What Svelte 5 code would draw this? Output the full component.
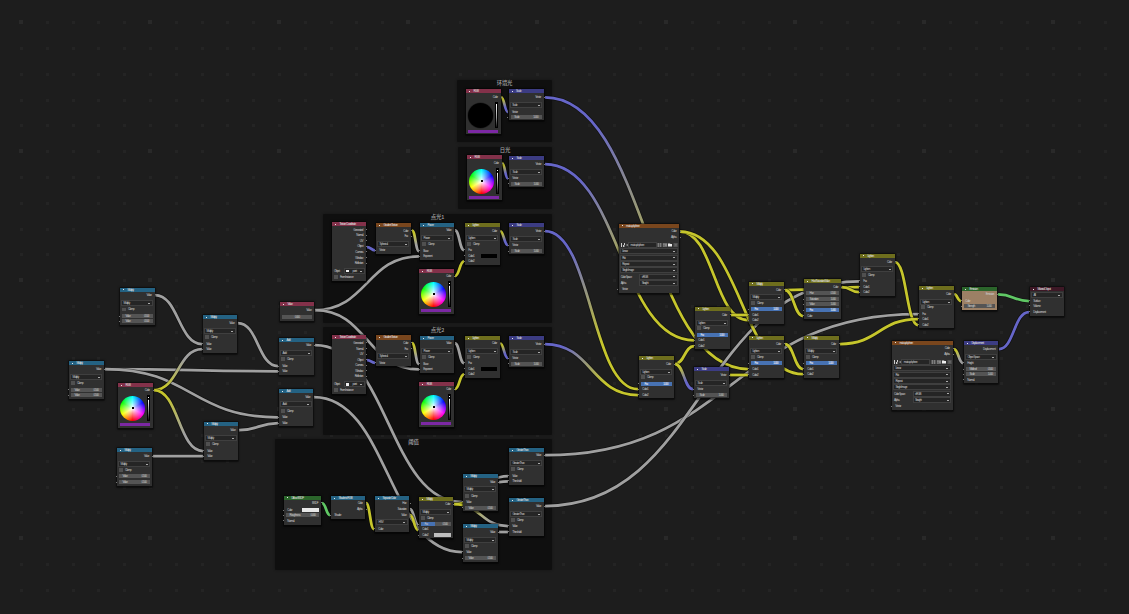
<script>
  const OUT = 'out', IN = 'in', DD = 'dd', CB = 'cb', F = 'field', B = 'blue';

  // Row: [kind, centre y, label, value]; every y is in canvas units.
  const math = (x, y, w, h, t, o, d, c, rows) => ({
    x, y, w, h, color: 'math', title: t,
    rows: [[OUT, o, 'Value'], [DD, d, t], [CB, c, 'Clamp'], ...rows]
  });
  const rgb = (x, y, o, black) => ({
    x, y, w: 34.5, h: 45, color: 'input', title: 'RGB',
    rows: [[OUT, o, 'Color'], ['wheel', o + 18, '', black], ['hex', o + 34.3, '']]
  });
  const scale = (x, y, o, d, v, f) => ({
    x, y, w: 35, h: 31.3, color: 'vector', title: 'Scale',
    rows: [[OUT, o, 'Vector'], [DD, d, 'Scale'], [IN, v, 'Vector'], [F, f, 'Scale', '1.000']]
  });
  const mix = (x, y, o, d, c, f, a, b, t = 'Lighten', fac = B) => ({
    x, y, w: 34.7, h: 42, color: 'mix', title: t,
    rows: [[OUT, o, 'Color'], [DD, d, t], [CB, c, 'Clamp'], [fac, f, 'Fac', '1.000'], [IN, a, 'Color1'], [IN, b, 'Color2']]
  });
  const coords = (y) => ({
    x: 332, y, w: 34, h: 58.7, color: 'input', title: 'Texture Coordinate',
    rows: [
      ...['Generated', 'Normal', 'UV', 'Object', 'Camera', 'Window', 'Reflection'].map((s, i) => [OUT, y + 7.8 + i * 5.55, s]),
      ['object', y + 49.3, 'Object', 'point'], [CB, y + 55, 'From Instancer']
    ]
  });
  const gradient = (y) => ({
    x: 376, y, w: 35, h: 30.7, color: 'texture', title: 'Gradient Texture',
    rows: [[OUT, y + 7.5, 'Color'], [OUT, y + 13.3, 'Fac'], [DD, y + 21, 'Spherical'], [IN, y + 27.3, 'Vector']]
  });
  const image = (x, y) => ({
    x, y, w: 60.5, h: 69.5, color: 'texture', title: 'matcap/sphere',
    rows: [
      [OUT, y + 7.6, 'Color'], [OUT, y + 13.4, 'Alpha'], ['file', y + 21, 'matcap/sphere'],
      [DD, y + 27.8, 'Linear'], [DD, y + 34, 'Flat'], [DD, y + 40.3, 'Repeat'], [DD, y + 46.5, 'Single Image'],
      ['pair', y + 53, 'Color Space', 'sRGB'], ['pair', y + 59.5, 'Alpha', 'Straight'], [IN, y + 65.8, 'Vector']
    ]
  });
  const V = (y) => [F, y, 'Value', '0.500'];
  const I = (y, t = 'Value') => [IN, y, t];

  const frames = [
    { x: 457, y: 80, w: 95, h: 62, t: '环境光' },
    { x: 458, y: 147, w: 94, h: 62, t: '日光' },
    { x: 323, y: 214, w: 229, h: 108.5, t: '点光1' },
    { x: 323, y: 327, w: 229, h: 108, t: '点光2' },
    { x: 275, y: 439, w: 277, h: 131, t: '阈值' }
  ];

  const nodes = [
    math(120, 287.7, 34.5, 37.5, 'Multiply', 295, 303.5, 309.5, [V(316.3), V(321.4)]),
    math(203, 315, 34.3, 38, 'Multiply', 323, 331.3, 337.3, [I(344), I(349.2)]),
    math(69, 361, 35, 38, 'Multiply', 369, 377.2, 383.3, [V(390), V(395.2)]),
    rgb(118, 383, 390),
    math(117, 448, 35, 38, 'Multiply', 456.3, 464.2, 470.2, [V(476.4), V(482.2)]),
    math(204, 421.7, 34.3, 38, 'Multiply', 430.2, 438.3, 444.3, [I(451), I(456.2)]),
    { x: 280, y: 302, w: 34.3, h: 19, color: 'input', title: 'Value', rows: [[OUT, 310, 'Value'], ['single', 317.2, '0.000']] },
    math(279, 338, 35, 37, 'Add', 345, 353.2, 359.3, [I(366.2), I(371.2)]),
    math(279, 389, 34.2, 37, 'Add', 397, 404.4, 411, [I(417.2), I(423.2)]),
    coords(222), gradient(223),
    math(420, 223, 34.2, 37, 'Power', 230.3, 238.3, 244.4, [I(251, 'Base'), I(256.2, 'Exponent')]),
    rgb(419.3, 269, 276),
    { ...mix(465, 223, 231, 238.3, 244.3, 250, 256, 261.2, 'Lighten', IN), swatch: 1 },
    scale(509, 223, 231, 239.3, 245.2, 251.3),
    coords(335.2), gradient(335.3),
    math(420, 336, 34.2, 37, 'Power', 343.3, 351.4, 357.3, [I(364, 'Base'), I(369.2, 'Exponent')]),
    rgb(419.3, 382, 389),
    { ...mix(465, 336, 343.3, 351.3, 357, 363, 369, 374.2, 'Lighten', IN), swatch: 1 },
    scale(509, 336, 344, 352.3, 358.2, 364),
    rgb(466, 89, 97, true), scale(508.7, 89, 97, 105.2, 112, 117.2),
    rgb(467, 155, 163), scale(509, 156, 164, 172.3, 178.3, 184),
    { x: 284, y: 495.7, w: 37, h: 29.3, color: 'shader', title: 'Diffuse BSDF', rows: [[OUT, 503, 'BSDF'], ['swatch', 510.3, 'Color', '#e7e7e7'], [F, 515.3, 'Roughness', '0.000'], [IN, 521, 'Normal']] },
    { x: 331, y: 496, w: 34.3, h: 23, color: 'math', title: 'Shader to RGB', rows: [[OUT, 503, 'Color'], [OUT, 509, 'Alpha'], [IN, 515, 'Shader']] },
    { x: 375, y: 496, w: 34.3, h: 36, color: 'math', title: 'Separate Color', rows: [[OUT, 503, 'Hue'], [OUT, 509, 'Saturation'], [OUT, 515, 'Value'], [DD, 522.4, 'HSV'], [IN, 529, 'Color']] },
    { x: 419, y: 497, w: 34, h: 41, color: 'mix', title: 'Multiply', rows: [[OUT, 504, 'Color'], [DD, 512, 'Multiply'], [CB, 518, 'Clamp'], ['half', 524.3, 'Fac', '0.500'], [IN, 529.2, 'Color1'], ['swatch', 535.3, 'Color2', '#bdbdbd']] },
    math(463, 474, 35, 37, 'Multiply', 482, 489.2, 496, [I(502), V(508)]),
    math(463, 524, 35, 38, 'Multiply', 532, 540, 546.3, [I(552), V(558.3)]),
    math(509, 448, 35, 37, 'Greater Than', 455, 463.3, 469.2, [I(476), I(481, 'Threshold')]),
    math(509, 498, 35, 38, 'Greater Than', 506, 514.2, 520.3, [I(526), I(532, 'Threshold')]),
    image(618.7, 223.7),
    mix(695, 306.7, 315, 323.2, 328.3, 335.3, 340.4, 346),
    mix(639, 356, 364, 372, 377.4, 384, 389.2, 395),
    scale(694, 367, 375, 383.3, 389.2, 395.2),
    mix(749, 281.7, 290, 297.3, 303.2, 309.3, 315, 320.1, 'Multiply'),
    mix(749, 335.7, 344, 351.3, 357.3, 363.4, 369, 375, 'Lighten'),
    { x: 804, y: 279, w: 37, h: 40, color: 'mix', title: 'Hue/Saturation/Value', rows: [[OUT, 287, 'Color'], [F, 293.3, 'Hue', '0.500'], [F, 299.1, 'Saturation', '1.000'], [F, 304.2, 'Value', '1.000'], [B, 310.3, 'Fac', '1.000'], [IN, 316, 'Color']] },
    mix(804, 335.7, 344, 351.3, 357.3, 363.4, 369, 374.1, 'Multiply'),
    mix(860, 253.7, 262, 269.3, 275.3, 281, 287, 292.1, 'Lighten', IN),
    mix(919, 286, 294.2, 302.3, 307.4, 313.8, 319, 325, 'Lighten', IN),
    { x: 962, y: 287, w: 35, h: 23, color: 'shader', title: 'Emission', tint: '#9c8065', rows: [[OUT, 294.2, 'Emission'], [IN, 301, 'Color'], [F, 306.2, 'Strength', '1.000']] },
    { x: 1030, y: 287, w: 34.3, h: 29, color: 'output', title: 'Material Output', rows: [[DD, 295.2, 'All'], [IN, 301, 'Surface'], [IN, 306, 'Volume'], [IN, 312, 'Displacement']] },
    image(892, 340.7),
    { x: 964, y: 341, w: 34.3, h: 42, color: 'vector', title: 'Displacement', rows: [[OUT, 349, 'Displacement'], [DD, 357.2, 'Object Space'], [IN, 363, 'Height'], [F, 369.2, 'Midlevel', '0.500'], [F, 374.4, 'Scale', '1.000'], [IN, 380, 'Normal']] }
  ];

  const hue = { g: '#a0a0a0', y: '#c6c62c', v: '#6666c9', s: '#60c865' };
  const links = [
    [155, 295, 202, 344, 'gg'], [238, 323, 278, 366.2, 'gg'], [105, 369, 278, 371.3, 'gg'], [105, 369, 278, 417.3, 'gg'],
    [154, 390, 202, 349.2, 'yg'], [154, 390, 203, 451, 'yg'], [153, 456.2, 203, 456.2, 'gg'], [239, 430.2, 278, 423, 'gg'],
    [315, 310, 419, 256.3, 'gg'], [315, 310, 419, 369.3, 'gg'], [315, 345.2, 462, 502, 'gg'], [314, 397, 462, 552, 'gg'],
    [367, 247, 375, 250.3, 'vv'], [412, 230.5, 419, 251, 'yg'], [455, 230.3, 464, 250, 'gg'], [455, 276, 464, 261.3, 'yy'], [500, 231, 508, 245.2, 'yv'],
    [367, 360, 375, 362.8, 'vv'], [412, 343, 419, 364, 'yg'], [455, 343.3, 464, 363, 'gg'], [455, 389, 464, 374.3, 'yy'], [500, 343.3, 508, 358.2, 'yv'],
    [501, 97, 508, 112, 'yv'], [502, 163, 508, 178.3, 'yv'],
    [322, 503, 330, 515, 'ss'], [366, 503, 374, 529, 'yy'], [410, 509, 418, 524.3, 'gg'], [410, 515, 418, 530, 'yy'],
    [454, 504, 508, 476, 'yg'], [454, 504, 508, 526, 'yg'], [499, 482, 508, 481.3, 'gg'], [499, 532, 508, 532, 'gg'],
    [545, 97.3, 748, 369, 'vy'], [545, 164, 694, 340.3, 'vy'], [545, 231, 638, 389.2, 'vy'], [545, 344, 638, 395, 'vy'],
    [545, 455.2, 918, 314, 'gg'], [545, 506, 859, 281.3, 'gg'],
    [680, 231.5, 748, 320.2, 'yy'], [680, 231.5, 803, 374.2, 'yy'],
    [731, 315, 748, 315, 'yy'], [675, 364, 694, 346, 'yy'], [675, 364, 693, 389.2, 'yv'], [730, 375, 748, 375, 'vy'],
    [785, 290, 859, 287, 'yy'], [785, 290, 803, 316, 'yy'], [785, 344, 803, 369, 'yy'], [842, 287, 859, 292.2, 'yy'],
    [895, 262, 918, 325, 'yy'], [840, 344, 918, 319, 'yy'], [954, 294.2, 961, 301, 'yy'], [998, 294.3, 1029, 301, 'ss'],
    [954, 349, 963, 363, 'yg'], [999, 349, 1029, 312, 'vv']
  ];
  const curve = ([a, b, c, d]) => `M${a} ${b}C${(a + c) / 2} ${b} ${(a + c) / 2} ${d} ${c} ${d}`;
  const paint = (l, i) => (l[4][0] === l[4][1] ? hue[l[4][0]] : `url(#blend${i})`);

  const rowHeight = (r) => (r[0] === 'wheel' ? 26 : 4);
  const gap = (n, i) => {
    const r = n.rows[i];
    const before = i ? n.rows[i - 1][1] + rowHeight(n.rows[i - 1]) / 2 : n.y + 4;
    return r[1] - rowHeight(r) / 2 - before;
  };
  const dots = [];
  for (let i = 0; i < 44; i++)
    for (let j = 0; j < 24; j++) dots.push([21 + i * 25.8, 22.2 + j * 25.8, i % 5 === 0 && j % 5 === 0]);
</script>

<main class="canvas">
  <svg class="layer" viewBox="0 0 1129 614" aria-hidden="true">
    {#each dots as [x, y, big]}
      <rect x={Math.round(x) - (big ? 2 : 1)} y={Math.round(y) - (big ? 2 : 1)} width={big ? 4 : 3} height={big ? 4 : 3} fill={big ? '#292929' : '#242424'} />
    {/each}
  </svg>

  {#each frames as f}
    <section class="frame" style="left:{f.x}px;top:{f.y}px;width:{f.w}px;height:{f.h}px"><h2>{f.t}</h2></section>
  {/each}

  <svg class="layer" viewBox="0 0 1129 614" aria-hidden="true">
    <defs>
      {#each links as l, i}
        {#if l[4][0] !== l[4][1]}
          <linearGradient id="blend{i}" gradientUnits="userSpaceOnUse" x1={l[0]} y1={l[1]} x2={l[2]} y2={l[3]}>
            <stop offset="0.15" stop-color={hue[l[4][0]]} /><stop offset="0.68" stop-color={hue[l[4][1]]} />
          </linearGradient>
        {/if}
      {/each}
    </defs>
    {#each links as l, i}
      <path class="edge" d={curve(l)} />
      <path class="link" d={curve(l)} stroke={l[1] === l[3] ? hue[l[4][1]] : paint(l, i)} />
    {/each}
  </svg>

  {#each nodes as n}
    <article class="node" style="left:{n.x}px;top:{n.y}px;width:{n.w}px;height:{n.h}px;background:{n.tint ?? '#303030'}">
      <header class={n.color}><i></i><span>{n.title}</span></header>
      {#each n.rows as r, i}
        <div class="row {r[0]}" style="margin-top:{gap(n, i)}px">
          {#if r[0] === 'wheel'}
            <div class="disc" class:black={r[3]}><b></b></div>
            <div class="level" class:zero={r[3]}><b></b></div>
          {:else if r[0] === 'hex'}
            <div class="purple"></div>
          {:else if r[0] === 'single'}
            <div class="value"><span>{r[2]}</span></div>
          {:else if r[0] === DD}
            <div class="box"><span>{r[2]}</span><i class="arrow"></i></div>
          {:else if r[0] === CB}
            <i class="check"></i><span>{r[2]}</span>
          {:else if r[0] === F || r[0] === B || r[0] === 'half'}
            <div class="value"><span>{r[2]}</span><span>{r[3]}</span></div>
          {:else if r[0] === 'object'}
            <span>{r[2]}</span><div class="box"><i class="cube"></i><span>{r[3]}</span><i class="arrow"></i></div>
          {:else if r[0] === 'pair'}
            <span>{r[2]}</span><div class="box"><span>{r[3]}</span><i class="arrow"></i></div>
          {:else if r[0] === 'file'}
            <svg class="thumb" viewBox="0 0 7 4"><path d="M0 0h1v4H0zM2 2h1.4v2H2zM3 0h1v2H3zM5.5 1.6h1.5v.8H5.5z" fill="#ccc" /></svg>
            <div class="box"><span>{r[2]}</span></div>
            <svg class="tools" viewBox="0 0 21 4">
              <path d="M0 0h5v4H0zM5.6 0h4.8v4H5.6zM16.5 0h4.2v4h-4.2z" fill="#545454" />
              <path d="M1 .5h1v1H1zM3 .5h1v1H3zM1 2.5h1v1H1zM3 2.5h1v1H3zM6.3.5h1.3v1.2H6.3zM8.4.5h1.2v3H8.4zM6.3 2.6h1.3v1H6.3z" fill="#a8a8a8" />
              <path d="M11 .4h2l.5.5H15v2.7h-4z" fill="#eeeeee" /><path d="M17.7 1.6h2v.7h-2z" fill="#888" />
            </svg>
          {:else}
            <span>{r[2]}</span>
            {#if r[0] === 'swatch' || (n.swatch && r[2] === 'Color1')}
              <div class="chip" style="background:{r[3] ?? '#000'}"></div>
            {/if}
          {/if}
        </div>
      {/each}
    </article>
  {/each}
</main>

<style>
  :global(body) { margin: 0; background: #1d1d1d; overflow: hidden; }
  .canvas { position: relative; width: 1129px; height: 614px; overflow: hidden; background: #1d1d1d; font: 3px/4px "Liberation Sans", "Noto Sans CJK SC", sans-serif; color: #cccccc; letter-spacing: -0.5px; }
  .layer { position: absolute; inset: 0; width: 1129px; height: 614px; }
  .frame { position: absolute; background: #0f0f0f; border-radius: 1px; box-shadow: 0 0 2px 1px rgba(0, 0, 0, 0.15); }
  h2 { margin: 0; font: 500 5.4px/6px "Noto Sans CJK SC", sans-serif; letter-spacing: -0.2px; text-align: center; color: #a5a5a5; }
  .edge { fill: none; stroke: rgba(5, 5, 5, 0.5); stroke-width: 4.2; }
  .link { fill: none; stroke-width: 2.75; }
  .node { position: absolute; border-radius: 0.6px; box-shadow: 0 0.3px 1.5px 1px rgba(0, 0, 0, 0.6); }
  header { height: 4.3px; margin-bottom: -0.3px; display: flex; align-items: center; padding-left: 3px; gap: 3.2px; color: #e2e2e2; line-height: 4px; white-space: nowrap; }
  header i { width: 1.2px; height: 1px; background: #eee; flex: none; }
  .math { background: #246283; }
  .input { background: #83314a; }
  .vector { background: #3c3c83; }
  .mix { background: #6e6e1d; }
  .texture { background: #79461d; }
  .shader { background: #2b652b; }
  .output { background: #3e1826; }
  .row { position: relative; height: 4px; display: flex; align-items: center; padding: 0 2px; box-sizing: border-box; white-space: nowrap; }
  .out { justify-content: flex-end; padding-right: 3px; }
  .in, .swatch { padding-left: 3.3px; justify-content: space-between; padding-right: 2.5px; }
  .out::after, .in::before, .swatch::before, .field::before, .blue::before, .half::before { content: ""; position: absolute; width: 1px; height: 1px; top: 1.5px; left: -1.4px; background: #777; }
  .out::after { left: auto; right: -1.4px; }
  .box { flex: 1; min-width: 0; height: 4px; background: #252525; outline: 0.5px solid #3f3f3f; display: flex; align-items: center; justify-content: space-between; padding: 0 1.5px; box-sizing: border-box; }
  .dd { padding-right: 2.6px; }
  .arrow { width: 2px; height: 0.8px; background: #aaa; flex: none; }
  .cb { gap: 2.2px; }
  .check { width: 3.8px; height: 3.8px; background: #505050; }
  .value { flex: 1; height: 3.8px; display: flex; align-items: center; justify-content: space-between; padding: 0 3.5px; background: #545454; }
  .single .value { justify-content: center; }
  .blue .value { background: #4772b3; color: #fff; }
  .half .value { background: linear-gradient(90deg, #4772b3 45%, #545454 45%); }
  .object, .pair { padding-right: 2.5px; justify-content: space-between; }
  .object .box { flex: 0 0 19px; }
  .pair .box { flex: 0 0 36.5px; }
  .cube { width: 3px; height: 2.4px; background: #eee; flex: none; }
  .file { gap: 1.3px; padding-right: 1px; }
  .thumb { width: 7px; height: 4px; flex: none; }
  .tools { width: 21px; height: 4px; flex: none; }
  .chip { width: 16.5px; height: 3.6px; }
  .wheel { height: 26px; padding: 0 2.5px 0 2.1px; justify-content: space-between; }
  .disc { width: 25px; height: 25px; border-radius: 50%; background: radial-gradient(circle closest-side, #fff 0, rgba(255, 255, 255, 0.55) 40%, rgba(255, 255, 255, 0) 96%), conic-gradient(#0ff, #00f 60deg, #f0f 120deg, #f00 180deg, #ff0 240deg, #0f0 300deg, #0ff); display: grid; place-items: center; }
  .disc b { width: 2px; height: 2px; background: #000; }
  .disc.black { background: #000; box-shadow: 0 0 0 0.5px #1f1f1f; }
  .level { width: 3.4px; height: 26px; background: #000; display: flex; flex-direction: column; align-items: center; }
  .level b { width: 1px; height: 23px; margin-top: 1.5px; background: linear-gradient(#fff 0 1px, #000 1px 2.4px, #fff 3px, #888 60%, #111); }
  .level.zero b { background: linear-gradient(#fff, #999 60%, #111); }
  .hex { padding: 0 2.8px 0 2.2px; }
  .purple { flex: 1; height: 3px; background: #7c28a4; }
</style>
